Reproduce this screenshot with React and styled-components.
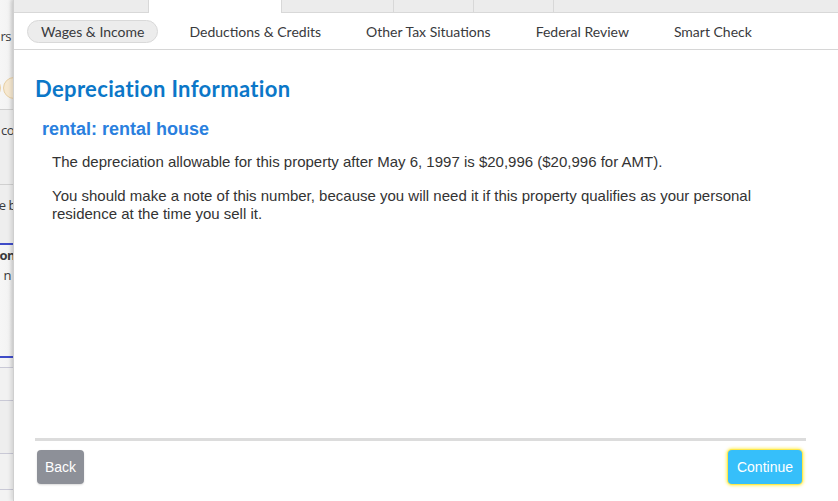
import React from "react";
import styled, { createGlobalStyle } from "styled-components";

const Global = createGlobalStyle`
  html, body { margin: 0; padding: 0; background: #fff; }
  body { width: 838px; height: 501px; overflow: hidden; font-family: "Liberation Sans", Arial, sans-serif; }
  * { box-sizing: border-box; }
`;

const Page = styled.div`
  display: flex;
  width: 838px;
  height: 501px;
  overflow: hidden;
`;

/* Background page peeking out on the left */
const Behind = styled.div`
  width: 13px;
  flex: none;
  display: flex;
  flex-direction: column;
  overflow: hidden;
  background: linear-gradient(to right, #f6f6f6 0%, #f3f3f3 70%, #e2e2e2 100%);
`;

const BehindRow = styled.div`
  height: ${(p) => p.h}px;
  flex: none;
  display: flex;
  justify-content: flex-end;
  align-items: center;
  white-space: nowrap;
  font-family: "Open Sans", "Noto Sans", sans-serif;
  font-size: 13px;
  letter-spacing: -0.5px;
  font-weight: ${(p) => (p.bold ? 700 : 400)};
  color: #393a3d;
  background: ${(p) => p.bg || "transparent"};
  border-bottom: ${(p) => (p.line ? `${p.lineW || 1}px solid ${p.line}` : "none")};
`;

const Fragment = styled.span`
  margin-right: ${(p) => p.shift || 0}px;
`;

const Coin = styled.span`
  display: inline-block;
  width: 22px;
  height: 22px;
  border-radius: 50%;
  background: #f6e8d0;
  border: 1px solid #e7cfa4;
  margin-left: 2px;
  margin-right: ${(p) => p.shift || 0}px;
  flex: none;
`;

const Modal = styled.div`
  flex: 1;
  display: flex;
  flex-direction: column;
  background: #fff;
  border-left: 1px solid #cfcfcf;
  box-shadow: -2px 0 4px rgba(0, 0, 0, 0.12);
  min-width: 0;
`;

const TabStrip = styled.div`
  height: 13px;
  flex: none;
  display: flex;
  background: #ececec;
  border-bottom: 1px solid #d8d8d8;
`;

const Tab = styled.div`
  width: ${(p) => (p.w ? `${p.w}px` : "auto")};
  flex: ${(p) => (p.w ? "none" : "1")};
  background: ${(p) => (p.active ? "#fff" : "transparent")};
  border-right: ${(p) => (p.last ? "none" : "1px solid #d8d8d8")};
  margin-bottom: ${(p) => (p.active ? "-1px" : "0")};
`;

const Nav = styled.nav`
  height: 37px;
  flex: none;
  display: flex;
  align-items: center;
  padding-left: 13px;
  gap: 17px;
  border-bottom: 1px solid #d6d6d6;
`;

const NavItem = styled.div`
  height: 23px;
  display: flex;
  align-items: center;
  padding: 0 13px;
  border-radius: 12px;
  font-family: "Lato", "Open Sans", sans-serif;
  font-size: 14px;
  color: #393a3d;
  white-space: nowrap;
  background: ${(p) => (p.active ? "#ececec" : "transparent")};
  border: 1px solid ${(p) => (p.active ? "#d9d9d9" : "transparent")};
`;

const Body = styled.main`
  flex: 1;
  display: flex;
  flex-direction: column;
  padding: 26px 32px 0 21px;
`;

const Title = styled.h1`
  margin: 0;
  font-family: "Lato", "Open Sans", sans-serif;
  font-weight: 700;
  font-size: 22px;
  letter-spacing: 0.35px;
  line-height: 26px;
  color: #0b77c8;
`;

const Subtitle = styled.h2`
  margin: 17px 0 0 7px;
  font-family: "Liberation Sans", Arial, sans-serif;
  font-weight: 700;
  font-size: 18px;
  line-height: 21px;
  color: #2a7fde;
`;

const Text = styled.p`
  margin: ${(p) => p.mt}px 0 0 17px;
  font-family: "Liberation Sans", Arial, sans-serif;
  font-size: 15px;
  line-height: 18px;
  color: #333;
`;

const Spacer = styled.div`
  flex: 1;
`;

const Footer = styled.div`
  border-top: 3px solid #dcdcdc;
  margin-bottom: 17px;
  padding: 9px 4px 0 2px;
  display: flex;
  justify-content: space-between;
`;

const Button = styled.button`
  height: 34px;
  padding: 0 ${(p) => (p.primary ? 9 : 8)}px;
  border-radius: 4px;
  border: none;
  font-family: "Liberation Sans", Arial, sans-serif;
  font-size: 14px;
  color: #fff;
  background: ${(p) => (p.primary ? "#36bffa" : "#8d9098")};
  box-shadow: ${(p) =>
    p.primary
      ? "0 0 0 1px #ffe94a, 0 0 3px 2px rgba(255, 230, 0, 0.55)"
      : "0 1px 2px rgba(0,0,0,0.15)"};
  cursor: pointer;
`;

export default function App() {
  return (
    <Page>
      <Global />
      <Behind>
        <BehindRow h={22} />
        <BehindRow h={28}>
          <Fragment shift={2}>rs</Fragment>
        </BehindRow>
        <BehindRow h={26} />
        <BehindRow h={24}>
          <Coin />
          <Coin shift={-12} />
        </BehindRow>
        <BehindRow h={10} line="#cfcfcf" />
        <BehindRow h={40} bg="#eeeeee">
          <Fragment shift={-1}>co</Fragment>
        </BehindRow>
        <BehindRow h={35} bg="#eeeeee" line="#d0d0d0" />
        <BehindRow h={40} bg="#eeeeee">
          <Fragment shift={-3}>e b</Fragment>
        </BehindRow>
        <BehindRow h={20} bg="#eeeeee" line="#3f4cc8" lineW={2} />
        <BehindRow h={20} bold>
          <Fragment shift={-2}>on</Fragment>
        </BehindRow>
        <BehindRow h={20}>
          <Fragment shift={2}>n</Fragment>
        </BehindRow>
        <BehindRow h={73} line="#3f4cc8" lineW={2} />
        <BehindRow h={10} line="#c9c9d6" />
        <BehindRow h={33} bg="#f1f1f1" line="#c9c9d6" />
        <BehindRow h={53} bg="#eeeeee" line="#c9c9d6" />
        <BehindRow h={36} bg="#f1f1f1" line="#c9c9d6" />
        <BehindRow h={20} bg="#f3f3f3" />
      </Behind>
      <Modal>
        <TabStrip>
          <Tab w={135} />
          <Tab w={133} active />
          <Tab w={112} />
          <Tab w={80} />
          <Tab w={80} />
          <Tab last />
        </TabStrip>
        <Nav>
          <NavItem active>Wages &amp; Income</NavItem>
          <NavItem>Deductions &amp; Credits</NavItem>
          <NavItem>Other Tax Situations</NavItem>
          <NavItem>Federal Review</NavItem>
          <NavItem>Smart Check</NavItem>
        </Nav>
        <Body>
          <Title>Depreciation Information</Title>
          <Subtitle>rental: rental house</Subtitle>
          <Text mt={13}>
            The depreciation allowable for this property after May 6, 1997 is $20,996 ($20,996 for AMT).
          </Text>
          <Text mt={16}>
            You should make a note of this number, because you will need it if this property qualifies as your personal
            residence at the time you sell it.
          </Text>
          <Spacer />
          <Footer>
            <Button>Back</Button>
            <Button primary>Continue</Button>
          </Footer>
        </Body>
      </Modal>
    </Page>
  );
}
